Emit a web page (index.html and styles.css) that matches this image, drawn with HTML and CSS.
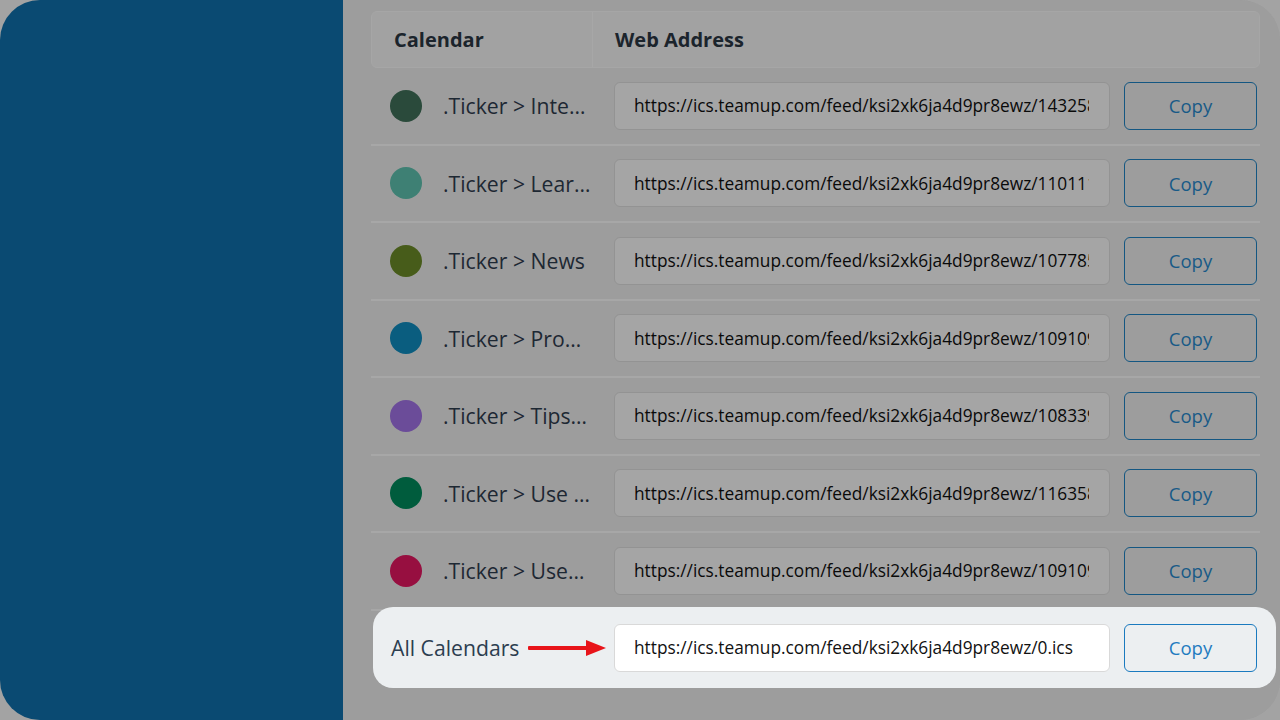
FILE: index.html
```html
<!DOCTYPE html>
<html lang="en">
<head>
<meta charset="utf-8">
<title>Calendar feeds</title>
<link rel="stylesheet" href="styles.css">
</head>
<body>
<div class="frame">
  <aside class="sidebar"></aside>
  <main class="main">
    <div class="table">
      <div class="thead">
        <div class="th th-cal">Calendar</div>
        <div class="th th-web">Web Address</div>
      </div>
      <div class="row">
        <div class="cal"><span class="dot c1"></span><span class="name">.Ticker &gt; Inte…</span></div>
        <div class="web"><input class="url" type="text" readonly value="https://ics.teamup.com/feed/ksi2xk6ja4d9pr8ewz/14325861.ics"><button class="copy">Copy</button></div>
      </div>
      <div class="row">
        <div class="cal"><span class="dot c2"></span><span class="name">.Ticker &gt; Lear…</span></div>
        <div class="web"><input class="url" type="text" readonly value="https://ics.teamup.com/feed/ksi2xk6ja4d9pr8ewz/11011124.ics"><button class="copy">Copy</button></div>
      </div>
      <div class="row">
        <div class="cal"><span class="dot c3"></span><span class="name">.Ticker &gt; News</span></div>
        <div class="web"><input class="url" type="text" readonly value="https://ics.teamup.com/feed/ksi2xk6ja4d9pr8ewz/10778593.ics"><button class="copy">Copy</button></div>
      </div>
      <div class="row">
        <div class="cal"><span class="dot c4"></span><span class="name">.Ticker &gt; Pro…</span></div>
        <div class="web"><input class="url" type="text" readonly value="https://ics.teamup.com/feed/ksi2xk6ja4d9pr8ewz/10910977.ics"><button class="copy">Copy</button></div>
      </div>
      <div class="row">
        <div class="cal"><span class="dot c5"></span><span class="name">.Ticker &gt; Tips…</span></div>
        <div class="web"><input class="url" type="text" readonly value="https://ics.teamup.com/feed/ksi2xk6ja4d9pr8ewz/10833912.ics"><button class="copy">Copy</button></div>
      </div>
      <div class="row">
        <div class="cal"><span class="dot c6"></span><span class="name">.Ticker &gt; Use …</span></div>
        <div class="web"><input class="url" type="text" readonly value="https://ics.teamup.com/feed/ksi2xk6ja4d9pr8ewz/11635874.ics"><button class="copy">Copy</button></div>
      </div>
      <div class="row">
        <div class="cal"><span class="dot c7"></span><span class="name">.Ticker &gt; Use…</span></div>
        <div class="web"><input class="url" type="text" readonly value="https://ics.teamup.com/feed/ksi2xk6ja4d9pr8ewz/10910932.ics"><button class="copy">Copy</button></div>
      </div>
      <div class="row-all">
        <div class="cal-all">
          <span class="name-all">All Calendars</span>
          <svg class="arrow" width="78" height="18" viewBox="0 0 78 18" aria-hidden="true">
            <rect x="0" y="7" width="62" height="4" rx="1" fill="#e8141a"/>
            <polygon points="58,1 78,9 58,17" fill="#e8141a"/>
          </svg>
        </div>
        <input class="url url-all" type="text" readonly value="https://ics.teamup.com/feed/ksi2xk6ja4d9pr8ewz/0.ics">
        <button class="copy copy-all">Copy</button>
      </div>
    </div>
  </main>
</div>
</body>
</html>
```

FILE: styles.css
```css
* { box-sizing: border-box; }

html, body {
  margin: 0;
  padding: 0;
  width: 1280px;
  height: 720px;
  overflow: hidden;
  background: #a3a3a3;
  font-family: "Open Sans", "Noto Sans", sans-serif;
}

.frame {
  display: flex;
  width: 1280px;
  height: 720px;
  border-radius: 40px;
  overflow: hidden;
  background: #9d9d9d;
}

.sidebar {
  flex: 0 0 343px;
  background: #0a4a72;
}

.main {
  flex: 1;
  padding: 11px 20px 0 28px;
  background: #9d9d9d;
}

.table {
  display: flex;
  flex-direction: column;
}

.thead {
  display: flex;
  height: 57px;
  background: #a2a2a2;
  border: 1px solid #a6a6a6;
  border-radius: 6px;
}

.th {
  display: flex;
  align-items: center;
  font-weight: 700;
  font-size: 20px;
  color: #1b242c;
}

.th-cal {
  flex: 0 0 221px;
  padding-left: 22px;
  border-right: 1px solid #a7a7a7;
}

.th-web {
  flex: 1;
  padding-left: 22px;
}

.row {
  display: flex;
  align-items: center;
  height: 77.5px;
  border-bottom: 2px solid #a7a7a7;
}

.cal {
  flex: 0 0 221px;
  display: flex;
  align-items: center;
  padding-left: 19px;
  gap: 21px;
}

.dot {
  flex: 0 0 32px;
  width: 32px;
  height: 32px;
  border-radius: 50%;
}

.c1 { background: #2a4a3b; }
.c2 { background: #3e8074; }
.c3 { background: #475c1a; }
.c4 { background: #0a5d7f; }
.c5 { background: #6b4c99; }
.c6 { background: #005c3d; }
.c7 { background: #970f40; }

.name {
  font-size: 21.2px;
  color: #1d2833;
  white-space: nowrap;
}

.web {
  flex: 1;
  display: flex;
  align-items: center;
  padding-left: 22px;
  gap: 14px;
}

.url {
  flex: 0 0 496px;
  width: 496px;
  min-width: 0;
  height: 48px;
  padding: 0 20px 0 19px;
  margin: 0;
  font-family: "Open Sans", "Noto Sans", sans-serif;
  font-size: 17.3px;
  color: #0a0a0a;
  background: #a5a5a5;
  border: 1px solid #939393;
  border-radius: 6px;
  outline: none;
}

.copy {
  flex: 0 0 133px;
  width: 133px;
  height: 48px;
  margin: 0;
  padding: 0;
  font-family: "Open Sans", "Noto Sans", sans-serif;
  font-size: 18.5px;
  color: #185a87;
  background: transparent;
  border: 1.5px solid #145782;
  border-radius: 6px;
}

.row-all {
  display: flex;
  align-items: center;
  height: 81px;
  margin: -3.5px -16px 0 2px;
  padding-right: 19px;
  background: #eceff1;
  border-radius: 20px;
}

.cal-all {
  flex: 0 0 241px;
  width: 241px;
  min-width: 0;
  display: flex;
  align-items: center;
  padding-left: 18px;
  overflow: visible;
}

.name-all {
  font-size: 21.2px;
  color: #2c3e50;
  white-space: nowrap;
}

.arrow {
  display: block;
  margin-left: 9px;
  flex: 0 0 78px;
}

.url-all {
  background: #ffffff;
  border-color: #d9d9d9;
  color: #111111;
}

.copy-all {
  margin-left: 14px;
  color: #1f7bc0;
  border-color: #1a7abf;
}
```
